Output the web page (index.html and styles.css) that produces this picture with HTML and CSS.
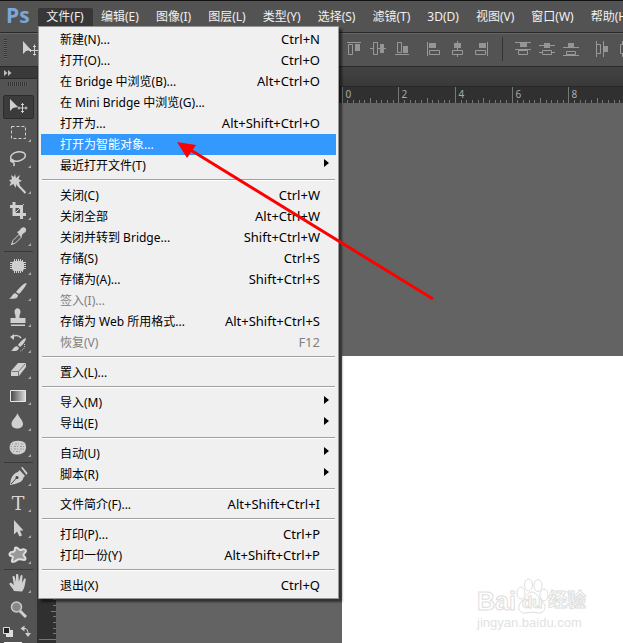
FILE: index.html
```html
<!DOCTYPE html>
<html lang="zh-CN">
<head>
    <meta charset="UTF-8">
    <meta name="viewport" content="width=device-width, initial-scale=1.0">
    <title>Ps</title>
    <link rel="stylesheet" href="styles.css">
</head>
<body>
<div class="app">

    <!-- 菜单栏 -->
    <nav class="menubar">
        <span class="logo">Ps</span>
        <div class="menu-root">
            <button class="menu-title open">文件(F)</button>
            <div class="dropdown">
                <button class="item">新建(N)...<span>Ctrl+N</span></button>
                <button class="item">打开(O)...<span>Ctrl+O</span></button>
                <button class="item">在 Bridge 中浏览(B)...<span>Alt+Ctrl+O</span></button>
                <button class="item">在 Mini Bridge 中浏览(G)...</button>
                <button class="item">打开为...<span>Alt+Shift+Ctrl+O</span></button>
                <button class="item active">打开为智能对象...</button>
                <button class="item sub">最近打开文件(T)</button>
                <hr>
                <button class="item">关闭(C)<span>Ctrl+W</span></button>
                <button class="item">关闭全部<span>Alt+Ctrl+W</span></button>
                <button class="item">关闭并转到 Bridge...<span>Shift+Ctrl+W</span></button>
                <button class="item">存储(S)<span>Ctrl+S</span></button>
                <button class="item">存储为(A)...<span>Shift+Ctrl+S</span></button>
                <button class="item" disabled>签入(I)...</button>
                <button class="item">存储为 Web 所用格式...<span>Alt+Shift+Ctrl+S</span></button>
                <button class="item" disabled>恢复(V)<span>F12</span></button>
                <hr>
                <button class="item">置入(L)...</button>
                <hr>
                <button class="item sub">导入(M)</button>
                <button class="item sub">导出(E)</button>
                <hr>
                <button class="item sub">自动(U)</button>
                <button class="item sub">脚本(R)</button>
                <hr>
                <button class="item">文件简介(F)...<span>Alt+Shift+Ctrl+I</span></button>
                <hr>
                <button class="item">打印(P)...<span>Ctrl+P</span></button>
                <button class="item">打印一份(Y)<span>Alt+Shift+Ctrl+P</span></button>
                <hr>
                <button class="item">退出(X)<span>Ctrl+Q</span></button>
            </div>
        </div>
        <button class="menu-title">编辑(E)</button>
        <button class="menu-title">图像(I)</button>
        <button class="menu-title">图层(L)</button>
        <button class="menu-title">类型(Y)</button>
        <button class="menu-title">选择(S)</button>
        <button class="menu-title">滤镜(T)</button>
        <button class="menu-title">3D(D)</button>
        <button class="menu-title">视图(V)</button>
        <button class="menu-title">窗口(W)</button>
        <button class="menu-title">帮助(H)</button>
    </nav>

    <!-- 选项栏 -->
    <div class="options">
        <div class="current-tool">
            <span class="grip-v"></span>
            <svg width="26" height="24" viewBox="0 0 26 24">
                <path class="lit" d="M3 4v13l3-3 5-1z"/>
                <path class="pen" d="M14.500 7.500v11M9 13.500h11M13 9.500h3M13 17.500h3M10.500 12v3M18.500 12v3"/>
            </svg>
        </div>
        <div class="align-group">
            <button class="align" aria-label="顶对齐"><svg viewBox="0 0 24 24"><path class="line" d="M5 5.500h14M6.500 7.500h4v10h-4z"/><path class="fill" d="M13 7h5v7h-5z"/></svg></button>
            <button class="align" aria-label="垂直居中对齐"><svg viewBox="0 0 24 24"><path class="line" d="M4 11.500h3M12 11.500h8M7.500 5.500h4v12h-4z"/><path class="fill" d="M14 7h4v9h-4z"/></svg></button>
            <button class="align" aria-label="底对齐"><svg viewBox="0 0 24 24"><path class="line" d="M5 17.500h14M7.500 5.500h4v10h-4z"/><path class="fill" d="M13 9h5v7h-5z"/></svg></button>
        </div>
        <div class="align-group">
            <button class="align" aria-label="左对齐"><svg viewBox="0 0 24 24"><path class="line" d="M5.500 5v14M7.500 13.500h10v4h-10z"/><path class="fill" d="M7 6h7v5H7z"/></svg></button>
            <button class="align" aria-label="水平居中对齐"><svg viewBox="0 0 24 24"><path class="line" d="M11.500 4v9M11.500 18v2M6.500 13.500h10v4h-10z"/><path class="fill" d="M8 6h7v5H8z"/></svg></button>
            <button class="align" aria-label="右对齐"><svg viewBox="0 0 24 24"><path class="line" d="M17.500 5v14M5.500 13.500h10v4h-10z"/><path class="fill" d="M9 6h7v5H9z"/></svg></button>
        </div>
        <div class="align-group divided">
            <button class="align" aria-label="按顶分布"><svg viewBox="0 0 24 24"><path class="line" d="M4 5.500h16M4 12.500h16M7.500 13.500h9v4h-9z"/><path class="fill" d="M9 6h7v4H9z"/></svg></button>
            <button class="align" aria-label="按中分布"><svg viewBox="0 0 24 24"><path class="line" d="M4 8.500h16M4 15.500h3M17 15.500h3M7.500 13.500h9v4h-9z"/><path class="fill" d="M9 6h6v5H9z"/></svg></button>
            <button class="align" aria-label="按底分布"><svg viewBox="0 0 24 24"><path class="line" d="M4 10.500h16M4 18.500h16M7.500 14.500h9v3h-9z"/><path class="fill" d="M9 6h6v4H9z"/></svg></button>
        </div>
        <div class="align-group">
            <button class="align" aria-label="按左分布"><svg viewBox="0 0 24 24"><path class="line" d="M5.500 4v16M12.500 4v16M5.500 7.500h4v9h-4z"/><path class="fill" d="M13 9h4v6h-4z"/></svg></button>
            <button class="align" aria-label="按水平居中分布"><svg viewBox="0 0 24 24"><path class="line" d="M5.500 7.500h4v9h-4zM7.500 4v3M7.500 17v3"/></svg></button>
        </div>
    </div>

    <div class="workspace">
        <!-- 工具箱 -->
        <aside class="toolbox">
            <div class="toolbox-head"><svg width="8" height="6" viewBox="0 0 8 6"><path d="M0 0v6l3.500-3zM4 0v6l3.500-3z" fill="#bbb"/></svg></div>
            <span class="grip-h"></span>
            <button class="tool selected" aria-label="移动"><svg viewBox="0 0 36 26"><path class="lit" d="M10 5v12l3-3 5-1z"/><path class="pen" d="M22.500 9v10M17.500 14h10M21 10.500h3M21 17.500h3M19 12.500v3M26 12.500v3"/></svg></button>
            <button class="tool more" aria-label="选框"><svg viewBox="0 0 36 26"><path class="pen" stroke-dasharray="3 2" d="M11.500 6.500h14v12h-14z"/></svg></button>
            <button class="tool more" aria-label="套索"><svg viewBox="0 0 36 26"><ellipse class="pen bold" cx="18" cy="10.500" rx="7.500" ry="4.500" transform="rotate(-12 18 10.500)"/><path class="pen bold" d="M11.500 13c-2 2 0 3.500 1.500 2.500s-1-2.500-1.500-1M13 16c1.500 1 1.500 2.500.5 4"/></svg></button>
            <button class="tool more" aria-label="魔棒"><svg viewBox="0 0 36 26"><path class="lit" d="M15 2l1 4 4-3-1.500 4L22 9l-3 1 1 4-3.500-2-1 4-2-4-4 2 1.500-4L9 8.500l3-1.500-1-4 3 2z"/><path class="pen thick" d="M17 12l8.500 9"/></svg></button>
            <button class="tool more" aria-label="裁剪"><svg viewBox="0 0 36 26"><path class="pen heavy" d="M10 8.500h11.500V21M14 4v12.500h12"/><path class="pen" d="M14 16l10-10"/></svg></button>
            <button class="tool more" aria-label="吸管"><svg viewBox="0 0 36 26"><path class="pen" d="M11.500 20.500l1.500-4 6-6 2.500 2.500-6 6zM11 21l2-2"/><path class="lit" d="M17 8l2-1 2.500-3c3-2 6 1 4 4l-3 2-1 3z"/></svg></button>
            <hr>
            <button class="tool more" aria-label="修补"><svg viewBox="0 0 36 26"><rect class="lit" x="12" y="8" width="12" height="10" rx="3"/><path class="pen" d="M14.500 6v14M16.500 6v14M18.500 6v14M20.500 6v14M22.500 7v12M10 9.500h16M10 11.500h16M10 13.500h16M10 15.500h16"/></svg></button>
            <button class="tool more" aria-label="画笔"><svg viewBox="0 0 36 26"><path class="lit" d="M26.500 4c1 .5-4 8-7.500 11l-3-2c3-4 8-9 10.500-9zM15 14l3 2c0 4-4 4-9 3.500 3-1 2.500-4 6-5.500z"/></svg></button>
            <button class="tool more" aria-label="图章"><svg viewBox="0 0 36 26"><path class="lit" d="M14.500 7c0-5 6-5 6 0 0 2-1.500 3-1 6h6v5h-15v-5h5c.5-3-1-4-1-6zM11 19.500h14V21H11z"/></svg></button>
            <button class="tool more" aria-label="历史记录画笔"><svg viewBox="0 0 36 26"><path class="lit" d="M26 7c0 3-4 8-6 9l-2-2c2-3 6-7 8-7zM17 15l2 2c-1 4-5 3-8 3 2-1 2-4 6-5zM10 6l4-3v6z"/><path class="pen bold" d="M12 6c3-2 7-2 9 1"/><path class="pen" stroke-dasharray="1 1" d="M24.500 13c1 3-1 6-4 7"/></svg></button>
            <button class="tool more" aria-label="橡皮擦"><svg viewBox="0 0 36 26"><path class="lit" d="M11 14l7-8h8v4l-7 9h-8z"/><path d="M11.500 14.500h7l7-8M18.500 14.500V19" fill="none" stroke="#777"/></svg></button>
            <button class="tool more" aria-label="渐变"><svg viewBox="0 0 36 26"><defs><linearGradient id="gr"><stop stop-color="#444"/><stop offset="1" stop-color="#ddd"/></linearGradient></defs><path d="M10.500 7.500h15v11h-15z" fill="url(#gr)" stroke="#e6e6e6"/></svg></button>
            <button class="tool more" aria-label="模糊"><svg viewBox="0 0 36 26"><path class="lit" d="M17.500 4c1 4 5.500 7 5.500 11 0 6-11.500 6-11.500 0 0-4 5-7 6-11z"/></svg></button>
            <button class="tool more" aria-label="海绵"><svg viewBox="0 0 36 26"><path class="lit" d="M11 8c3-3 11-3 14 0 2 4 1 8-2 10-4 2-8 2-11 0-3-3-3-7-1-10z"/><path d="M12 9h12M11 11.500h14M11 14h14M13 16.500h9" fill="none" stroke="#999" stroke-dasharray="1 2 2 1"/></svg></button>
            <hr>
            <button class="tool more" aria-label="钢笔"><svg viewBox="0 0 36 26"><path class="lit" d="M19.500 6l5.500 6-1.500 1.500c-1 5-6 6-13.500 7.500 1-7 2-11 8-13zM21 3.500l1.500-.5 5 6-1 2z"/><path d="M11 20l5.500-6" stroke="#444"/><circle cx="17" cy="13.500" r="1.500" fill="#444"/></svg></button>
            <button class="tool more type" aria-label="文字">T</button>
            <button class="tool more" aria-label="路径选择"><svg viewBox="0 0 36 26"><path class="lit" d="M14 4v14.500l3-3 2.500 5 2.500-1-2-5h3.500z"/></svg></button>
            <button class="tool more" aria-label="自定形状"><svg viewBox="0 0 36 26"><path d="M15 6c2-2 4 3 6 2s5-1 5 1-4 3-2 5 2 4 0 4-5-2-7 0-6 3-5 0 2-3-1-4-1-4 1-4 3-1 3-3z" fill="#999" stroke="#ddd" stroke-width="2"/></svg></button>
            <hr>
            <button class="tool more" aria-label="抓手"><svg viewBox="0 0 36 26"><path class="lit" d="M14 20c-1-3-5-6-4.500-7.500s3-.5 4.500 2L12.500 6c0-1.500 2-1.500 2.300 0l1.200 5V4c0-1.500 2.200-1.500 2.400 0l.4 7L20.500 5c.4-1.400 2.200-1 2 .3L22 12l2-4c.7-1 2.200-.3 1.800 1-1 4-.8 8-3.800 11.500z"/></svg></button>
            <button class="tool" aria-label="缩放"><svg viewBox="0 0 36 26"><circle cx="16.500" cy="10" r="5" fill="#888" stroke="#ccc" stroke-width="1.500"/><path class="pen heavy" d="M20 14l6 6"/></svg></button>
            <div class="swatches">
                <svg width="36" height="20" viewBox="0 0 36 20"><path d="M6 7h7v7H6z" fill="#ddd"/><path d="M3.500 4.500h6v6h-6z" fill="#222" stroke="#ddd"/><path class="pen" d="M22 5.500h3q3 0 3 6"/><path class="lit" d="M20.500 5.500l4-3v6zM25 10h6l-3 4z"/><path d="M4 19.500h18" stroke="#fff"/></svg>
            </div>
        </aside>

        <!-- 文档窗口 -->
        <main class="document">
            <div class="tabs"></div>
            <svg class="ruler-top" id="rulerTop"></svg>
            <div class="view">
                <svg class="ruler-left" id="rulerLeft"></svg>
                <div class="canvas">
                    <div class="sheet">
                        <div class="watermark">
                            <div class="brand">
                                <span>Bai</span>
                                <span class="paw">
                                    <svg width="32" height="38" viewBox="0 0 32 38"><g fill="#fff" stroke="#dedede"><ellipse cx="5" cy="16" rx="4" ry="6"/><ellipse cx="12.500" cy="8" rx="4" ry="6"/><ellipse cx="22" cy="8.500" rx="4" ry="6"/><ellipse cx="28" cy="18" rx="4" ry="6"/><path d="M16 15c5 0 6 6 10 9 6 6 2 13-4 12-4-1-8-1-12 0-7 1-10-6-4-12 4-3 5-9 10-9z"/></g></svg>
                                    <span class="du">du</span>
                                </span>
                                <span class="cn">经验</span>
                            </div>
                            <div class="site">jingyan.baidu.com</div>
                        </div>
                    </div>
                </div>
            </div>
        </main>
    </div>

    <!-- 指示箭头 -->
    <svg class="pointer" width="260" height="162" viewBox="0 0 260 162">
        <path d="M12 7L256 157" stroke="#f00" stroke-width="3"/>
        <path d="M0 0l19 3-9 13z" fill="#f00"/>
    </svg>
</div>

<script>
// 标尺：每 2cm 一个长刻度
var step = 56.7;

function drawRuler(id, vertical, origin, size) {
    var el = document.getElementById(id);
    var box = el.getBoundingClientRect();
    var max = vertical ? box.height : box.width;
    var cell = step / 10;
    var html = '';
    for (var n = -60; n < 400; n++) {
        var p = Math.floor(origin + n * cell) + 0.5;
        if (p < 0) continue;
        if (p > max) break;
        var len = n % 10 == 0 ? size : (n % 5 == 0 ? 5 : 3);
        if (vertical) {
            html += '<path d="M' + (size - len) + ' ' + p + 'H' + size + '"/>';
        } else {
            html += '<path d="M' + p + ' ' + (size - len) + 'V' + size + '"/>';
            if (n >= 0 && n % 10 == 0) {
                html += '<text x="' + (p + 3) + '" y="11">' + n / 5 + '</text>';
            }
        }
    }
    el.innerHTML = html;
}

drawRuler('rulerTop', false, 303, 16);
drawRuler('rulerLeft', true, 253, 17);
</script>
</body>
</html>
```

FILE: styles.css
```css
* {
    box-sizing: border-box;
}

body {
    margin: 0;
    background: #535353;
    font-family: "Noto Sans", "Noto Sans CJK SC", sans-serif;
    font-size: 12px;
}

button {
    border: 0;
    margin: 0;
    padding: 0;
    background: none;
    color: inherit;
    font: inherit;
}

.app {
    position: relative;
    display: flex;
    flex-direction: column;
    height: 100vh;
    overflow: hidden;
}

/* 菜单栏 */
.menubar {
    display: flex;
    flex: none;
    height: 33px;
    padding-top: 7px;
    border-top: 1px solid #111;
    border-bottom: 1px solid #2a2a2a;
    background: #535353;
    color: #f0f0f0;
    white-space: nowrap;
}

.logo {
    flex: none;
    width: 38px;
    padding-left: 6px;
    color: #7ba7d9;
    font: bold 21px/14px "Open Sans", sans-serif;
}

.menu-root {
    position: relative;
    z-index: 5;
}

.menu-title {
    flex: none;
    height: 18px;
    padding: 0 9px 0 8px;
    line-height: 18px;
}

.menu-title.open {
    width: 55px;
    background: #373737;
    border-radius: 2px 2px 0 0;
}

.dropdown {
    position: absolute;
    top: 18px;
    left: 0;
    width: 301px;
    padding: 2px;
    border: 1px solid #979797;
    background: #f0f0f0;
    box-shadow: 3px 3px 2px rgba(0, 0, 0, .5);
    color: #000;
}

.item {
    display: flex;
    justify-content: space-between;
    width: 100%;
    height: 21px;
    padding: 0 16px 0 19px;
    line-height: 21px;
    text-align: left;
}

.item span {
    font-size: 13px;
}

.item.active {
    background: #3399ff;
    color: #fff;
}

.item:disabled {
    color: #808080;
}

.item.sub::after {
    content: "";
    height: 0;
    margin: 4px -9px 0 0;
    border: 4px solid transparent;
    border-left: 5px solid #000;
    border-right: 0;
}

.dropdown hr {
    height: 2px;
    margin: 3px 1px 4px;
    border: 0;
    border-top: 1px solid #a0a0a0;
    border-bottom: 1px solid #fff;
}

/* 选项栏 */
.options {
    display: flex;
    flex: none;
    align-items: center;
    gap: 8px;
    height: 34px;
    padding-bottom: 2px;
    border-top: 1px solid #666;
    border-bottom: 1px solid #2a2a2a;
    background: #535353;
}

.current-tool {
    display: flex;
    flex: none;
    align-items: center;
    gap: 13px;
    width: 334px;
    padding-left: 4px;
}

.grip-v {
    width: 3px;
    height: 20px;
    background: repeating-linear-gradient(#333 0 1px, #666 1px 2px);
}

.align-group {
    display: flex;
    flex: none;
}

.divided {
    padding-left: 8px;
    border-left: 1px solid #333;
}

.align,
.align svg {
    display: block;
    width: 24px;
    height: 24px;
}

.line {
    fill: none;
    stroke: #999;
}

.fill {
    fill: #959595;
}

/* 工具箱 */
.workspace {
    display: flex;
    flex: 1;
    min-height: 0;
}

.toolbox {
    flex: none;
    width: 39px;
    border-right: 2px solid #303030;
    background: #535353;
}

.toolbox-head {
    height: 12px;
    padding: 2px 4px;
    border-bottom: 1px solid #2a2a2a;
    background: #3a3a3a;
    line-height: 6px;
}

.grip-h {
    display: block;
    width: 20px;
    height: 4px;
    margin: 3px 8px 8px;
    background: repeating-linear-gradient(90deg, #333 0 1px, #606060 1px 2px);
}

.tool {
    display: block;
    position: relative;
    width: 36px;
    height: 26px;
}

.tool svg {
    display: block;
    width: 36px;
    height: 26px;
}

.tool.selected::before {
    content: "";
    position: absolute;
    inset: 1px 2px 1px 3px;
    border: 1px solid #2c2c2c;
    border-radius: 2px;
    background: #3b3b3b;
}

.tool.selected svg {
    position: relative;
}

.tool.more::after {
    content: "";
    position: absolute;
    right: 5px;
    bottom: 4px;
    border-bottom: 3px solid #aaa;
    border-left: 3px solid transparent;
}

.type {
    color: #d6d6d6;
    font: 19px/26px "DejaVu Serif", serif;
}

.lit {
    fill: #d0d0d0;
}

.pen {
    fill: none;
    stroke: #d0d0d0;
}

.bold {
    stroke-width: 1.5;
}

.thick {
    stroke-width: 2;
}

.heavy {
    stroke-width: 3;
}

.toolbox hr {
    height: 1px;
    margin: 1px 4px;
    border: 0;
    background: #383838;
}

/* 文档窗口 */
.document {
    display: flex;
    flex: 1;
    flex-direction: column;
    min-width: 0;
}

.tabs {
    flex: none;
    height: 20px;
    border-bottom: 1px solid #282828;
    background: linear-gradient(#434343, #393939);
}

.ruler-top {
    flex: none;
    width: 100%;
    height: 16px;
    background: #303030;
}

.ruler-left {
    flex: none;
    width: 17px;
    height: 100%;
    background: #303030;
}

.ruler-top path,
.ruler-left path {
    stroke: #777;
}

.ruler-top text {
    fill: #aaa;
    font-size: 10px;
}

.view {
    display: flex;
    flex: 1;
    min-height: 0;
}

.canvas {
    display: flex;
    flex: 1;
    padding: 253px 0 0 286px;
    background: #636363;
}

.sheet {
    display: flex;
    flex: 1;
    align-items: flex-end;
    justify-content: flex-end;
    padding: 0 34px 12px 0;
    background: #fff;
}

.watermark {
    width: 112px;
    color: #fff;
    font-family: "Liberation Sans", "Noto Sans CJK SC", sans-serif;
    font-weight: bold;
    -webkit-text-stroke: 1px #dedede;
}

.brand {
    display: flex;
    align-items: flex-end;
    height: 38px;
    font-size: 25px;
    line-height: 28px;
}

.paw {
    position: relative;
    height: 38px;
}

.du {
    position: absolute;
    left: 6px;
    bottom: 2px;
    font-size: 17px;
    line-height: 20px;
}

.cn {
    font-size: 19px;
}

.site {
    color: #e2e2e2;
    font-size: 13px;
    font-weight: normal;
    line-height: 16px;
    -webkit-text-stroke: 0;
}

/* 指示箭头 */
.pointer {
    position: absolute;
    top: 142px;
    left: 177px;
    z-index: 10;
}
```
